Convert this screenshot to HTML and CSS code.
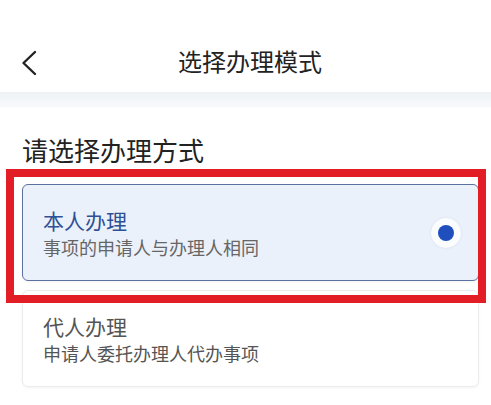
FILE: index.html
```html
<!DOCTYPE html>
<html lang="zh-CN">
<head>
<meta charset="utf-8">
<title>选择办理模式</title>
<link rel="stylesheet" href="styles.css">
</head>
<body>
<div class="page">
  <header class="topbar">
    <svg class="back" width="16" height="26" viewBox="0 0 16 26" aria-hidden="true">
      <path d="M14 2 L2.5 13 L14 24" fill="none" stroke="#222" stroke-width="2.4" stroke-linecap="round" stroke-linejoin="round"/>
    </svg>
    <h1 class="title">选择办理模式</h1>
    <span class="spacer"></span>
  </header>
  <div class="band"></div>
  <main class="content">
    <h2 class="heading">请选择办理方式</h2>
    <div class="options">
      <div class="option selected">
        <div class="texts">
          <div class="opt-title">本人办理</div>
          <div class="opt-desc">事项的申请人与办理人相同</div>
        </div>
        <span class="radio"><span class="dot"></span></span>
      </div>
      <div class="option">
        <div class="texts">
          <div class="opt-title">代人办理</div>
          <div class="opt-desc">申请人委托办理人代办事项</div>
        </div>
      </div>
    </div>
  </main>
  <div class="highlight"></div>
</div>
</body>
</html>
```

FILE: styles.css
```css
* { box-sizing: border-box; }
html, body { margin: 0; padding: 0; background: #fff; }
body {
  font-family: "Noto Sans CJK SC", "Noto Sans", sans-serif;
  color: #222;
  width: 491px;
  height: 405px;
  overflow: hidden;
}
.page { position: relative; width: 491px; height: 405px; }

.topbar {
  display: grid;
  grid-template-columns: 1fr auto 1fr;
  align-items: center;
  padding: 45px 12px 15px 21px;
  height: 92px;
}
.back { display: block; margin-top: 3px; }
.title {
  margin: 0;
  font-size: 24px;
  line-height: 32px;
  font-weight: 400;
  color: #222;
}
.band {
  height: 15px;
  background: linear-gradient(#eef2f5, #f8f9fb);
}
.content { padding: 27px 12px 0 22px; }
.heading {
  margin: 0;
  font-size: 26px;
  line-height: 32px;
  font-weight: 400;
  color: #222;
}
.options {
  margin-top: 18px;
  display: flex;
  flex-direction: column;
  gap: 9px;
}
.option {
  height: 97px;
  border: 1px solid #ececec;
  border-radius: 6px;
  background: #fff;
  box-shadow: 0 1px 3px rgba(0,0,0,0.05);
  padding: 0 17px 0 20px;
  display: flex;
  align-items: center;
  justify-content: space-between;
}
.option.selected {
  background: #ebf1fb;
  border-color: #5b72a0;
}
.texts { display: flex; flex-direction: column; gap: 2px; }
.opt-title {
  font-size: 21px;
  line-height: 26px;
  color: #555;
}
.opt-desc {
  font-size: 18px;
  line-height: 24px;
  color: #555;
}
.selected .opt-title { color: #2d5096; }
.selected .opt-desc { color: #666; }
.radio {
  width: 30px;
  height: 30px;
  border-radius: 50%;
  background: #fbfcfe;
  box-shadow: 0 0 2px rgba(120,140,180,0.25);
  display: flex;
  align-items: center;
  justify-content: center;
}
.dot {
  width: 16px;
  height: 16px;
  border-radius: 50%;
  background: #1f4fbd;
}
.highlight {
  position: absolute;
  left: 6px;
  top: 169px;
  width: 480px;
  height: 134px;
  border: 8px solid #e21d26;
  pointer-events: none;
}
```
